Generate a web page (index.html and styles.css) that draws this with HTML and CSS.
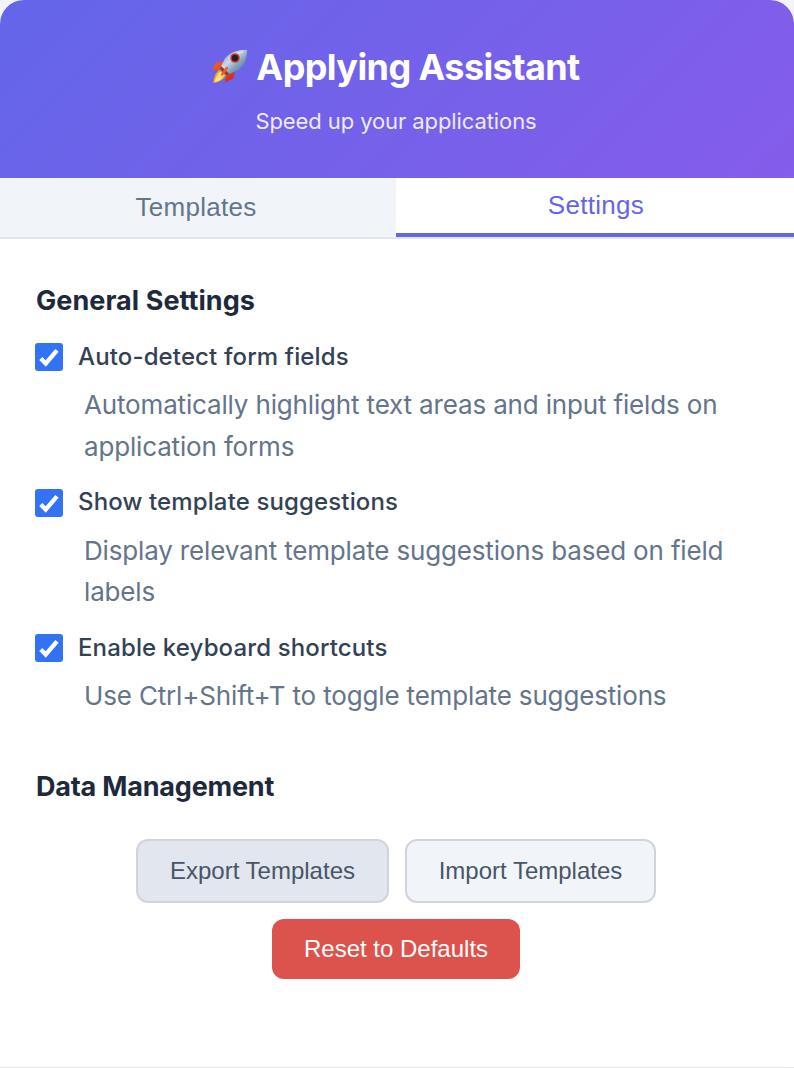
FILE: index.html
```html
<!DOCTYPE html>
<html lang="en">
<head>
<meta charset="utf-8">
<title>Applying Assistant</title>
<link rel="stylesheet" href="styles.css">
</head>
<body>
<div class="popup">
  <header class="header">
    <h1 class="title">
      <svg class="rocket" viewBox="0 0 36 36" aria-hidden="true">
        <defs>
          <linearGradient id="hull" x1="0" y1="0" x2="1" y2="1">
            <stop offset="0" stop-color="#6189ad"/>
            <stop offset=".4" stop-color="#c9dae4"/>
            <stop offset=".6" stop-color="#86a6c2"/>
            <stop offset="1" stop-color="#365b83"/>
          </linearGradient>
          <linearGradient id="fin" x1="0" y1="0" x2="1" y2="1">
            <stop offset="0" stop-color="#f6632d"/>
            <stop offset="1" stop-color="#c5261f"/>
          </linearGradient>
        </defs>
        <path d="M13 12.500 5 13.500 1 21.500l9-.5zM24 21l-1.500 8.500-8.500 4 1.500-10z" fill="url(#fin)"/>
        <path d="M9 20.500c-5 3-6 8-7 13.500C7 33.500 13 31 15 26z" fill="#f3a024"/>
        <path d="M9.500 22.500c-4 3-4.500 6-6 10.500 5-.5 8.500-3 9.500-7z" fill="#ffe576"/>
        <path d="M36 1c-9-.5-17 2-22 8.500L8.500 20l7 6.500L28 20.500C34 15 36 9 36 1z" fill="url(#hull)"/>
        <path d="m8.500 20 7 6.500 3-1.500-8.500-8z" fill="#913b3b"/>
        <path d="M32 3.500c-5 0-11 2-15 6" fill="none" stroke="#d8e7ef" stroke-width="1"/>
        <circle cx="24" cy="9" r="4.800" fill="#d43b2a"/>
        <circle cx="24" cy="9" r="3.200" fill="#271d2c"/>
        <path d="m16 19-5 6.500" stroke="#ef5b34" stroke-width="2.400" stroke-linecap="round"/>
      </svg>
      <span class="title-text">Applying Assistant</span>
    </h1>
    <p class="subtitle">Speed up your applications</p>
  </header>
  <nav class="tabs">
    <button class="tab">Templates</button>
    <button class="tab active">Settings</button>
  </nav>
  <main class="content">
    <section class="general">
      <h2 class="heading">General Settings</h2>
      <div class="setting">
        <label class="option"><span class="check"><svg viewBox="0 0 28 28"><path d="m5.800 15.500 4.900 5L22 7.300"/></svg></span><span class="name">Auto-detect form fields</span></label>
        <p class="desc">Automatically highlight text areas and input fields on<br>application forms</p>
      </div>
      <div class="setting">
        <label class="option"><span class="check"><svg viewBox="0 0 28 28"><path d="m5.800 15.500 4.900 5L22 7.300"/></svg></span><span class="name">Show template suggestions</span></label>
        <p class="desc">Display relevant template suggestions based on field<br>labels</p>
      </div>
      <div class="setting">
        <label class="option"><span class="check"><svg viewBox="0 0 28 28"><path d="m5.800 15.500 4.900 5L22 7.300"/></svg></span><span class="name">Enable keyboard shortcuts</span></label>
        <p class="desc">Use Ctrl+Shift+T to toggle template suggestions</p>
      </div>
    </section>
    <section class="data">
      <h2 class="heading heading-data">Data Management</h2>
      <div class="actions">
        <button class="btn export">Export Templates</button>
        <button class="btn import">Import Templates</button>
        <button class="btn reset">Reset to Defaults</button>
      </div>
    </section>
  </main>
</div>
</body>
</html>
```
FILE: styles.css
```css
* { box-sizing: border-box; }
body { margin: 0; background: #f3f4fa; font-family: Inter, sans-serif; }
h1, h2, p { margin: 0; }
button { font-family: "Liberation Sans", Arial, sans-serif; margin: 0; border: 0; }
.popup { height: 1068px; background: #fff; border-radius: 24px 24px 0 0; overflow: hidden; border-bottom: 1px solid #e4e4ea; white-space: nowrap; }
.header { height: 178px; padding-top: 44px; background: linear-gradient(135deg, #6366e9, #855ceb); color: #fff; text-align: center; }
.title { display: flex; justify-content: center; align-items: center; gap: 9px; height: 46px; font-size: 36px; line-height: 46px; font-weight: 700; letter-spacing: -0.6px; padding-right: 3px; }
.rocket { width: 36px; height: 36px; }
.subtitle { margin-top: 14px; padding-right: 2px; font-size: 22px; line-height: 34px; letter-spacing: -0.09px; color: #edeafd; }
.tabs { display: grid; grid-template-columns: 396px 398px; height: 61px; border-bottom: 2px solid #e2e6ec; }
.tab { height: 59px; padding: 0 4px 1px 0; font-size: 26px; letter-spacing: 0.3px; background: #f1f5f9; color: #64748b; }
.tab.active { padding: 0 0 1px 2px; background: #fff; color: #6366e9; border-bottom: 4px solid #6366e9; }
.content { padding: 44px 36px 0; }
.heading { font-size: 27px; line-height: 36px; font-weight: 700; color: #1e293b; letter-spacing: 0.05px; }
.heading-data { letter-spacing: -0.2px; }
.general { height: 486px; }
.setting { height: 145.6px; padding-top: 20px; }
.option { display: flex; align-items: center; gap: 15px; height: 36px; margin-left: -1px; font-size: 24px; font-weight: 500; letter-spacing: 0.13px; color: #334155; }
.name { margin-top: -2px; }
.check { width: 28px; height: 28px; border-radius: 3px; background: #3273f6; }
.check svg { display: block; }
.check path { fill: none; stroke: #fff; stroke-width: 4.3; }
.desc { padding: 9px 0 0 48px; font-size: 26px; line-height: 41.6px; letter-spacing: -0.16px; color: #64748b; }
.actions { display: flex; flex-wrap: wrap; justify-content: center; gap: 16px; margin-top: 34px; padding-right: 2px; }
.btn { height: 64px; padding: 0; border-radius: 12px; font-size: 24px; color: #475569; background: #f1f5f9; border: 2px solid #d1d5db; }
.export { width: 253px; background: #e2e6ee; }
.import { width: 251px; }
.reset { width: 248px; height: 60px; border: 0; color: #fff; background: #dc524c; }
```
